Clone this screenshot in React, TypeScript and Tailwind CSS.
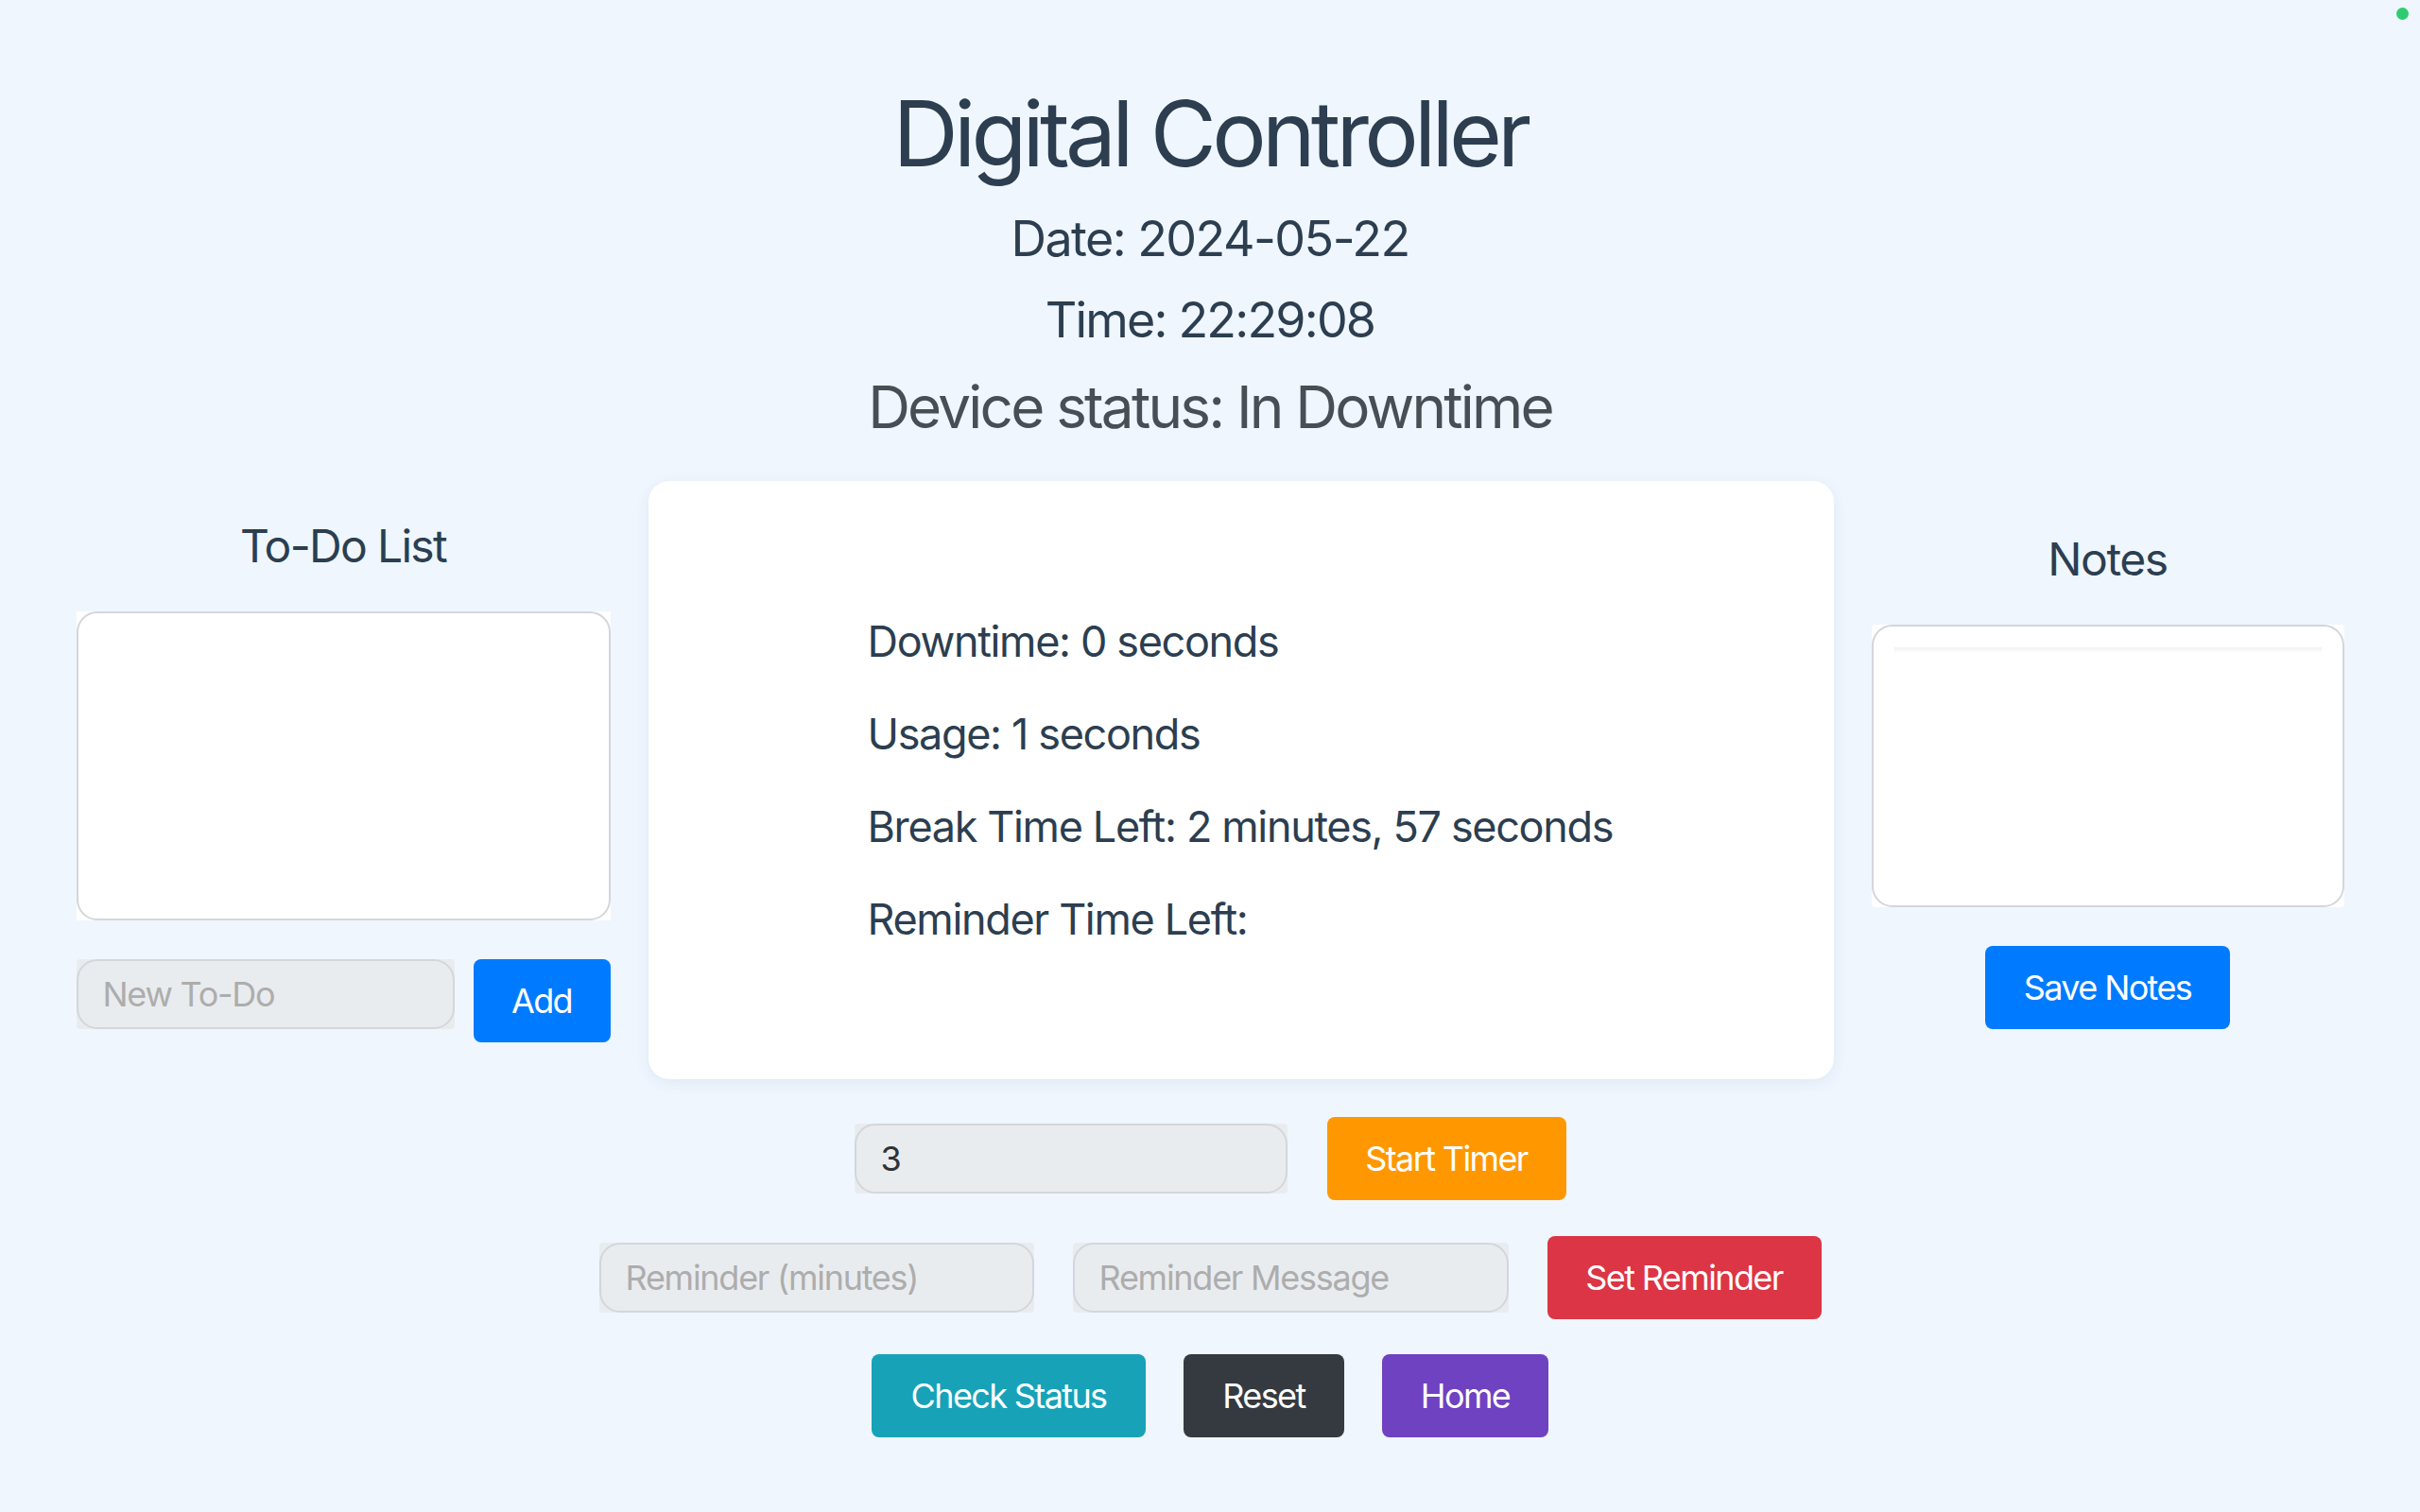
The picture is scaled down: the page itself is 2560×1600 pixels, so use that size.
import React from 'react'

const font = { fontFamily: 'Inter, "Noto Sans", sans-serif' }

function Field({ value, placeholder, className }: { value?: string; placeholder?: string; className: string }) {
  // grey box with a rounded inner border, as in the reference
  return (
    <div className={`h-[74px] bg-[#e9ecef] rounded-[4px] ${className}`}>
      <div className="h-full w-full rounded-[22px] border-2 border-[#d3d6db] flex items-center pl-[26px] text-[36px] tracking-[-0.035em]">
        {value ? (
          <span className="text-[#2f3337]">{value}</span>
        ) : (
          <span className="text-[#adadad]">{placeholder}</span>
        )}
      </div>
    </div>
  )
}

function Btn({ label, className }: { label: string; className: string }) {
  return (
    <button className={`h-[88px] rounded-[8px] text-white text-[36px] tracking-[-0.045em] flex items-center justify-center ${className}`}>
      {label}
    </button>
  )
}

export default function App() {
  return (
    <div className="min-h-[1600px] w-full bg-[#eff6fe] text-[#2c3e50] flex flex-col items-center pt-[83px] relative" style={font}>
      <span className="absolute top-[8px] right-[12px] w-[13px] h-[13px] rounded-full bg-[#2ecc71]" />

      <h1 className="text-[96px] leading-[116px] tracking-[-0.05em]">Digital Controller</h1>
      <p className="text-[52px] leading-[62px] mt-[23px] tracking-[-0.03em]">Date: 2024-05-22</p>
      <p className="text-[52px] leading-[62px] mt-[24px] tracking-[-0.035em]">Time: 22:29:08</p>
      <p className="text-[62px] leading-[75px] mt-[23px] text-[#484e55] tracking-[-0.045em]">Device status: In Downtime</p>

      <div className="mt-[41px] flex items-center gap-[40px]">
        {/* To-Do */}
        <div className="w-[565px] flex flex-col items-center">
          <h2 className="text-[48px] leading-[58px] mb-[40px] tracking-[-0.035em]">To-Do List</h2>
          <div className="w-full h-[327px] bg-white">
            <div className="h-full w-full rounded-[22px] border-2 border-[#d3d6db]" />
          </div>
          <div className="w-full mt-[41px] flex items-start gap-[20px]">
            <Field placeholder="New To-Do" className="w-[400px]" />
            <Btn label="Add" className="w-[145px] bg-[#007bff]" />
          </div>
        </div>

        {/* status card */}
        <div className="w-[1254px] h-[633px] bg-white rounded-[22px] shadow-[0_4px_16px_rgba(30,60,120,0.07)] flex flex-col justify-center pl-[232px] gap-[44px] text-[45px] leading-[54px] tracking-[-0.03em]">
          <p>Downtime: 0 seconds</p>
          <p>Usage: 1 seconds</p>
          <p>Break Time Left: 2 minutes, 57 seconds</p>
          <p>Reminder Time Left:</p>
        </div>

        {/* Notes */}
        <div className="w-[500px] flex flex-col items-center">
          <h2 className="text-[48px] leading-[58px] mb-[40px] tracking-[-0.03em]">Notes</h2>
          <div className="w-full h-[299px] bg-white rounded-[4px]">
            <div className="h-full w-full rounded-[22px] border-2 border-[#d3d6db] px-[22px] pt-[22px] pb-[23px]">
              <div className="h-full w-full shadow-[inset_0_5px_4px_-2px_rgba(0,0,0,0.06)]" />
            </div>
          </div>
          <Btn label="Save Notes" className="mt-[41px] w-[259px] bg-[#007bff]" />
        </div>
      </div>

      <div className="mt-[40px] flex items-center gap-[42px]">
        <Field value="3" className="w-[458px]" />
        <Btn label="Start Timer" className="w-[253px] bg-[#ff9800]" />
      </div>

      <div className="mt-[38px] flex items-center gap-[41px]">
        <Field placeholder="Reminder (minutes)" className="w-[460px]" />
        <Field placeholder="Reminder Message" className="w-[461px]" />
        <Btn label="Set Reminder" className="w-[290px] bg-[#dc3545]" />
      </div>

      <div className="mt-[37px] flex items-center gap-[40px]">
        <Btn label="Check Status" className="w-[290px] bg-[#17a2b8]" />
        <Btn label="Reset" className="w-[170px] bg-[#343a40]" />
        <Btn label="Home" className="w-[176px] bg-[#6f42c1]" />
      </div>
    </div>
  )
}
